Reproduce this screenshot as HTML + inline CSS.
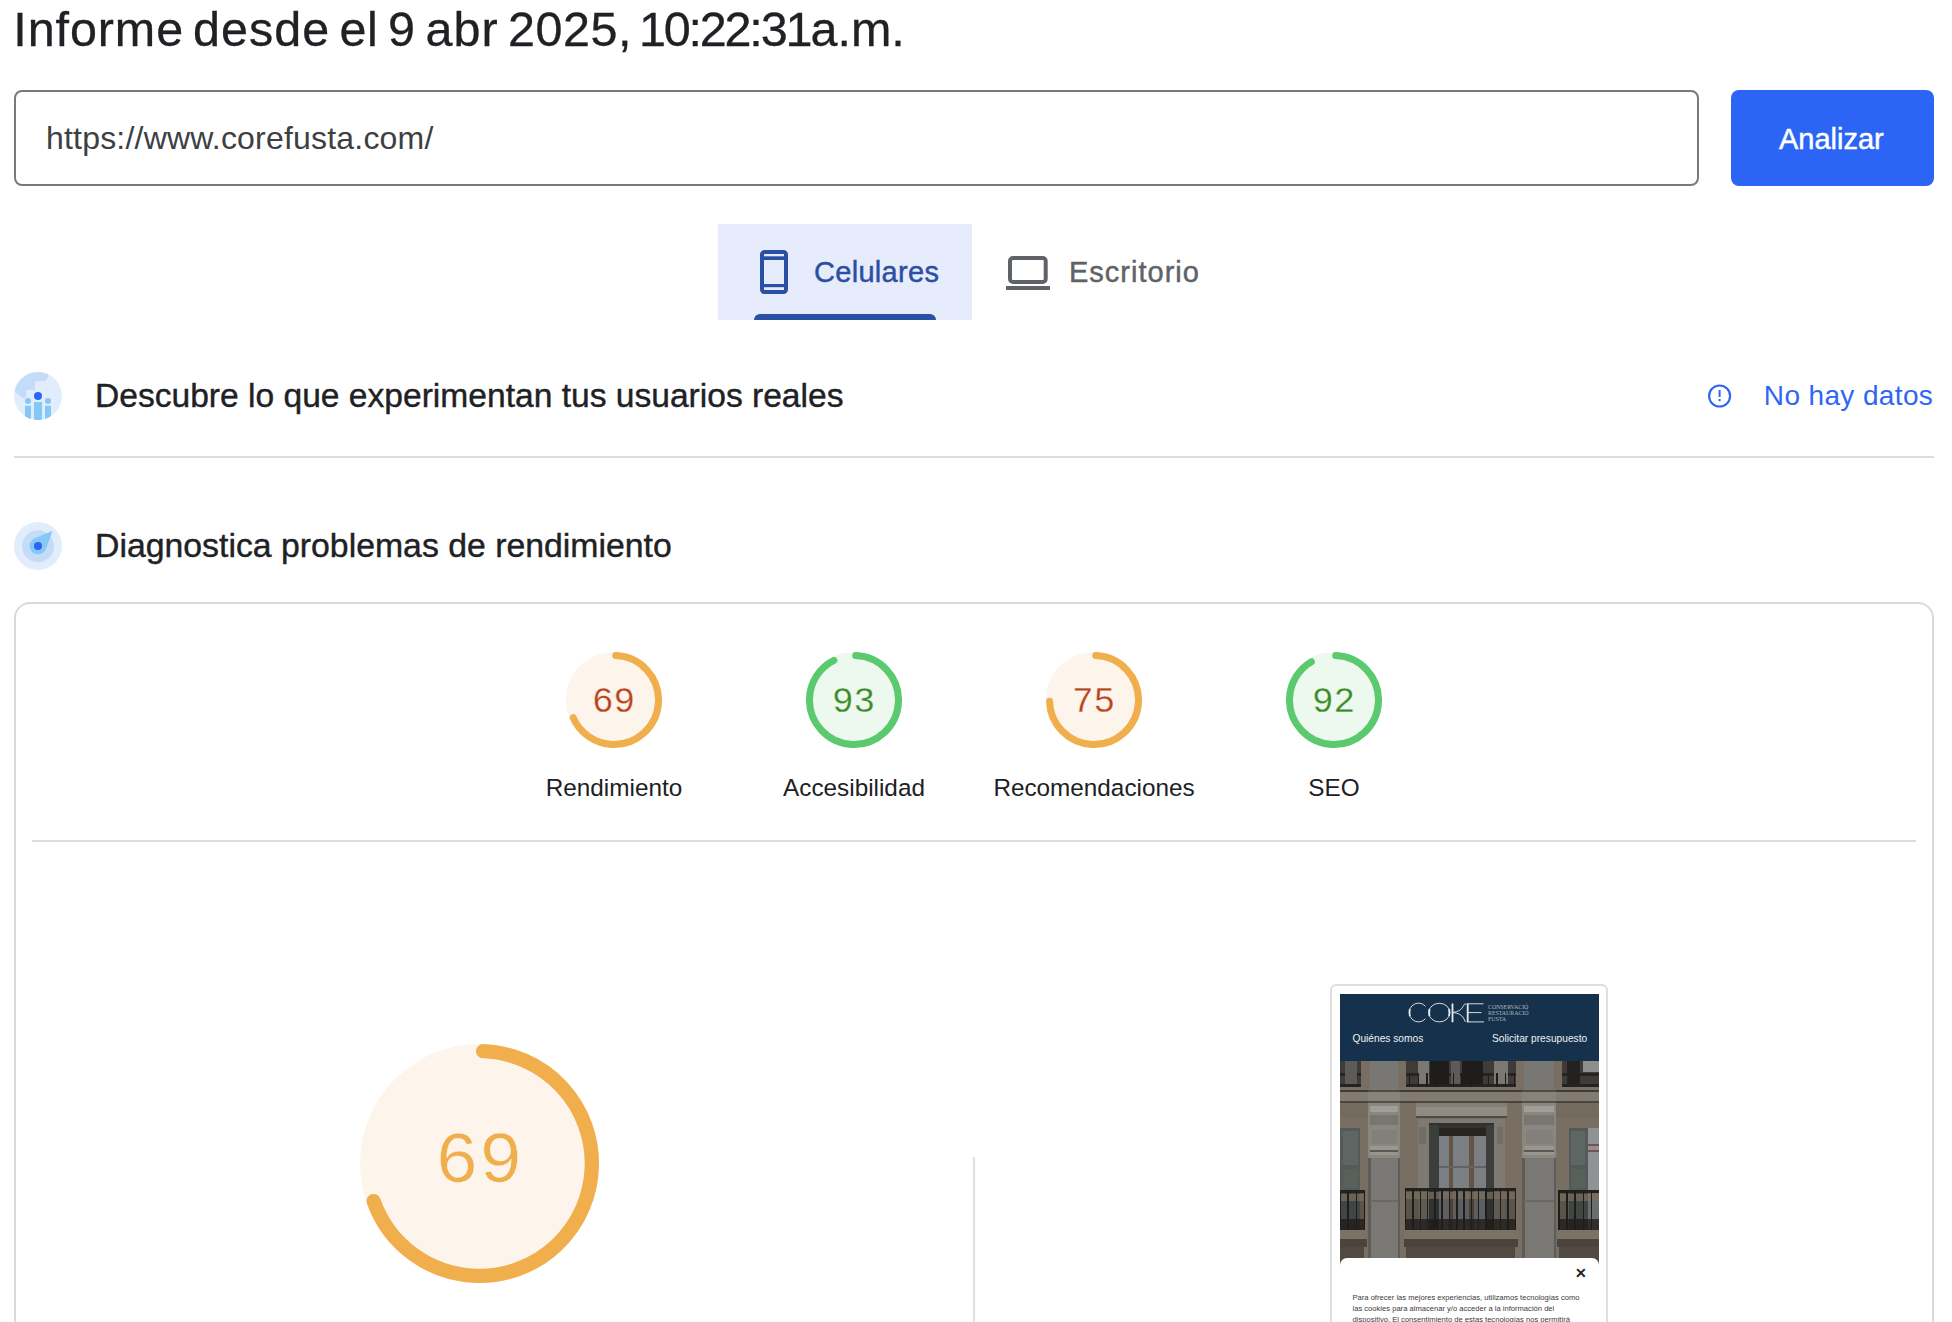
<!DOCTYPE html>
<html><head><meta charset="utf-8">
<style>
html,body{margin:0;padding:0;background:#fff;}
body{width:1952px;height:1322px;position:relative;overflow:hidden;font-family:"Liberation Sans",sans-serif;color:#202124;}
.a{position:absolute;white-space:nowrap;line-height:1;}
#title{left:0;top:4.5px;font-size:48.5px;color:#202124;-webkit-text-stroke:0.3px #202124;}
.tw{position:absolute;top:0;white-space:nowrap;}
#inp{position:absolute;left:14px;top:90px;width:1681px;height:92px;border:2px solid #777b7f;border-radius:8px;box-sizing:content-box;}
#url{left:46px;top:122px;font-size:32px;letter-spacing:0.2px;color:#3c4043;}
#btn{position:absolute;left:1731px;top:90px;width:203px;height:96px;background:#2c65f6;border-radius:8px;}
#btntxt{left:1779px;top:125px;font-size:29px;color:#fff;-webkit-text-stroke:0.45px #fff;}
#tab1{position:absolute;left:718px;top:224px;width:254px;height:96px;background:#e6ecfb;}
#tabline{position:absolute;left:754px;top:314px;width:182px;height:6px;background:#2a50a5;border-radius:6px 6px 0 0;}
#cel{left:814px;top:257.5px;font-size:29px;letter-spacing:0.3px;color:#2a4fa3;-webkit-text-stroke:0.45px #2a4fa3;}
#esc{left:1069px;top:258px;font-size:29px;letter-spacing:1px;color:#5f6368;-webkit-text-stroke:0.45px #5f6368;}
#h1{left:95px;top:379px;font-size:33.6px;color:#202124;-webkit-text-stroke:0.4px #202124;}
#nohay{left:1763.8px;top:381.5px;font-size:28px;letter-spacing:0.37px;color:#2f66f6;}
#div1{position:absolute;left:14px;top:456px;width:1920px;height:2px;background:#dadce0;}
#h2{left:95px;top:529px;font-size:33.8px;color:#202124;-webkit-text-stroke:0.4px #202124;}
#card{position:absolute;left:14px;top:602px;width:1916px;height:900px;border:2px solid #d9dadf;border-radius:16px;}
.lbl{font-size:24.3px;color:#202124;text-align:center;width:300px;}
#div2{position:absolute;left:32px;top:840px;width:1884px;height:2px;background:#dcdcdc;}
#vline{position:absolute;left:973px;top:1157px;width:2px;height:200px;background:#e0e0e0;}
#frame{position:absolute;left:1330px;top:984px;width:274px;height:400px;border:2px solid #dfdfdf;border-radius:6px;}
#shot{position:absolute;left:1340px;top:994px;width:259px;height:400px;background:#15314b;overflow:hidden;}
#photo i{position:absolute;display:block;}
#photo{position:absolute;left:0;top:0;width:259px;height:330px;filter:brightness(0.86) saturate(0.72);}
.gnum{font-family:"Liberation Mono",monospace;}
</style></head>
<body>
<div class="a" id="title"><span class="tw" style="left:13.3px;letter-spacing:0.9px">Informe</span><span class="tw" style="left:193.0px;letter-spacing:1.0px">desde</span><span class="tw" style="left:339.5px;letter-spacing:0.5px">el</span><span class="tw" style="left:388.0px;letter-spacing:0px">9</span><span class="tw" style="left:425.5px;letter-spacing:1.0px">abr</span><span class="tw" style="left:508.0px;letter-spacing:0.5px">2025,</span><span class="tw" style="left:639.0px;letter-spacing:-2.2px">10:22:31</span><span class="tw" style="left:810.5px;letter-spacing:0px">a.m.</span></div>
<div id="inp"></div>
<div class="a" id="url">https://www.corefusta.com/</div>
<div id="btn"></div>
<div class="a" id="btntxt">Analizar</div>

<div id="tab1"></div>
<div id="tabline"></div>
<svg class="a" style="left:0;top:0" width="1952" height="330">
  <!-- phone -->
  <rect x="762" y="252" width="24" height="40" rx="2.5" fill="none" stroke="#2a50a5" stroke-width="4"/>
  <rect x="762" y="256.3" width="24" height="3.7" fill="#2a50a5"/>
  <rect x="762" y="284" width="24" height="3.2" fill="#2a50a5"/>
  <!-- laptop -->
  <rect x="1010" y="258" width="35.7" height="24" rx="3" fill="none" stroke="#5f6368" stroke-width="4"/>
  <rect x="1006" y="286" width="44" height="4" fill="#5f6368"/>
</svg>
<div class="a" id="cel">Celulares</div>
<div class="a" id="esc">Escritorio</div>

<svg class="a" style="left:14px;top:372px" width="48" height="48" viewBox="0 0 48 48">
  <defs><clipPath id="cc1"><circle cx="24" cy="24" r="24"/></clipPath></defs>
  <circle cx="24" cy="24" r="24" fill="#e1edfc"/>
  <g clip-path="url(#cc1)">
    <path d="M-2 17.5 L8.2 25.4 Q10 26.8 12.1 25.5 L12.1 18.1 L21 18.1 L21 9.2 L29.5 9.2 Q31.5 9.2 33 7 L34.5 2.5 L34.5 -2 L-2 -2 Z" fill="#c4dcf8"/>
    <rect x="11" y="33.8" width="6" height="20" fill="#84c8f7"/>
    <rect x="20" y="30.1" width="8" height="24" fill="#84c8f7"/>
    <rect x="31" y="33.8" width="6" height="20" fill="#84c8f7"/>
  </g>
  <circle cx="14" cy="28.9" r="3" fill="#84c8f7"/>
  <circle cx="34" cy="28.9" r="3" fill="#84c8f7"/>
  <circle cx="24" cy="24" r="4" fill="#2f63f5"/>
</svg>
<div class="a" id="h1">Descubre lo que experimentan tus usuarios reales</div>
<svg class="a" style="left:1706px;top:383px" width="28" height="26" viewBox="0 0 28 26">
  <circle cx="13.6" cy="13" r="10.5" fill="none" stroke="#2f66f6" stroke-width="2.2"/>
  <rect x="12.6" y="7" width="2" height="7" fill="#2f66f6"/>
  <rect x="12.6" y="16" width="2" height="2.2" fill="#2f66f6"/>
</svg>
<div class="a" id="nohay">No hay datos</div>
<div id="div1"></div>

<svg class="a" style="left:14px;top:522px" width="48" height="48" viewBox="0 0 48 48">
  <circle cx="24" cy="24" r="24" fill="#e1edfc"/>
  <circle cx="24" cy="24.2" r="16" fill="#c4dcf8"/>
  <path d="M38 9.5 L31.49 26.81 A 8 8 0 1 1 20.93 16.61 Z" fill="#84c8f7" stroke="#84c8f7" stroke-width="0.8" stroke-linejoin="round"/>
  <circle cx="24" cy="24" r="4" fill="#2f63f5"/>
</svg>
<div class="a" id="h2">Diagnostica problemas de rendimiento</div>

<div id="card"></div>
<div id="div2"></div>
<div id="vline"></div>
<svg class="a" style="left:566px;top:652px" width="96" height="96" viewBox="0 0 96 96">
  <circle cx="48" cy="48" r="48" fill="#fdf5ec"/>
  <circle cx="48" cy="48" r="44.500" fill="none" stroke="#f1ae4c" stroke-width="7" stroke-linecap="round" stroke-dasharray="189.43 279.60" transform="rotate(-87.747 48 48)"/>
</svg>
<svg class="a" style="left:806px;top:652px" width="96" height="96" viewBox="0 0 96 96">
  <circle cx="48" cy="48" r="48" fill="#edf8ef"/>
  <circle cx="48" cy="48" r="44.500" fill="none" stroke="#5bca6f" stroke-width="7" stroke-linecap="round" stroke-dasharray="256.53 279.60" transform="rotate(-87.747 48 48)"/>
</svg>
<svg class="a" style="left:1046px;top:652px" width="96" height="96" viewBox="0 0 96 96">
  <circle cx="48" cy="48" r="48" fill="#fdf5ec"/>
  <circle cx="48" cy="48" r="44.500" fill="none" stroke="#f1ae4c" stroke-width="7" stroke-linecap="round" stroke-dasharray="206.20 279.60" transform="rotate(-87.747 48 48)"/>
</svg>
<svg class="a" style="left:1286px;top:652px" width="96" height="96" viewBox="0 0 96 96">
  <circle cx="48" cy="48" r="48" fill="#edf8ef"/>
  <circle cx="48" cy="48" r="44.500" fill="none" stroke="#5bca6f" stroke-width="7" stroke-linecap="round" stroke-dasharray="253.73 279.60" transform="rotate(-87.747 48 48)"/>
</svg>
<svg class="a" style="left:359.5px;top:1043.7px" width="239.0" height="239.0" viewBox="0 0 239.0 239.0">
  <circle cx="119.5" cy="119.5" r="119.5" fill="#fdf5ec"/>
  <circle cx="119.5" cy="119.5" r="112.350" fill="none" stroke="#f1ae4c" stroke-width="14.3" stroke-linecap="round" stroke-dasharray="487.08 705.92" transform="rotate(-88.177 119.5 119.5)"/>
</svg>
<div class="a gnum" style="left:592px;top:685px;font-size:36px;color:#b7441c;-webkit-text-stroke:0.3px #fdf5ec;">69</div>
<div class="a gnum" style="left:832px;top:685px;font-size:36px;color:#3a8b25;-webkit-text-stroke:0.3px #edf8ef;">93</div>
<div class="a gnum" style="left:1072px;top:685px;font-size:36px;color:#b7441c;-webkit-text-stroke:0.3px #fdf5ec;">75</div>
<div class="a gnum" style="left:1312px;top:685px;font-size:36px;color:#3a8b25;-webkit-text-stroke:0.3px #edf8ef;">92</div>
<div class="a gnum" style="left:435px;top:1126px;font-size:73px;color:#f1ae4c;-webkit-text-stroke:0.5px #fdf5ec;">69</div>
<div class="a lbl" style="left:464px;top:776px;">Rendimiento</div>
<div class="a lbl" style="left:704px;top:776px;">Accesibilidad</div>
<div class="a lbl" style="left:944px;top:776px;">Recomendaciones</div>
<div class="a lbl" style="left:1184px;top:776px;">SEO</div>
<div id="frame"></div>
<div id="shot">
<div style="position:absolute;left:0;top:0;width:259px;height:67px;background:#15314b;"></div>
<svg class="a" style="left:0;top:0" width="259" height="40" viewBox="0 0 259 40"><g fill="none" stroke="#e6ecf1" stroke-width="0.9">
<path d="M85.5 12.3 A 9.3 9.4 0 1 0 85.5 24.7"/>
<ellipse cx="99.3" cy="18.6" rx="10.6" ry="9.3"/>
<path d="M112.5 18.5 Q 121 17.5 123 12.5 Q 124 9.6 126.5 9.8 M112.5 18.5 Q 120.5 19 123.5 24 L 125.5 28"/>
<path d="M127.7 9.8 H143.5 M127.7 18.6 H141.5 M127.7 27.9 H144"/>
</g><g fill="none" stroke="#e6ecf1" stroke-width="1.8"><path d="M112.5 9.4 V28.2 M127.7 9.4 V28.2"/>
<path d="M69.8 15 Q 69.2 18.6 69.8 22.2"/><path d="M89.5 15 Q 88.9 18.6 89.5 22.2 M109.1 15 Q 109.7 18.6 109.1 22.2"/></g></svg>
<div class="a" style="left:148px;top:9.5px;font-family:'Liberation Serif',serif;font-size:6px;line-height:6.4px;letter-spacing:-0.1px;color:#a9b4bf;">CONSERVACIÓ<br>RESTAURACIÓ<br>FUSTA</div>
<div class="a" style="left:12.5px;top:40.3px;font-size:10.2px;color:#eef1f4;">Quiénes somos</div>
<div class="a" style="left:152px;top:40.3px;font-size:10.2px;color:#eef1f4;">Solicitar presupuesto</div>
<div id="photo"><i style="left:0.0px;top:66.6px;width:259.5px;height:205.7px;background:#8f806c;"></i><i style="left:65.7px;top:66.6px;width:110.4px;height:26.2px;background:#4a453f;"></i><i style="left:65.7px;top:78.5px;width:110.4px;height:3.2px;background:#2e2a26;"></i><i style="left:65.7px;top:90.4px;width:110.4px;height:3.2px;background:#2b2825;"></i><i style="left:64.1px;top:92.8px;width:113.9px;height:12.7px;background:#938470;"></i><i style="left:64.1px;top:103.6px;width:113.9px;height:3.5px;background:#4f463b;"></i><i style="left:222.1px;top:66.6px;width:37.3px;height:26.2px;background:#4a453f;"></i><i style="left:222.1px;top:78.5px;width:37.3px;height:3.2px;background:#2e2a26;"></i><i style="left:222.1px;top:90.4px;width:37.3px;height:3.2px;background:#2b2825;"></i><i style="left:220.5px;top:92.8px;width:40.8px;height:12.7px;background:#938470;"></i><i style="left:220.5px;top:103.6px;width:40.8px;height:3.5px;background:#4f463b;"></i><i style="left:0.0px;top:66.6px;width:21.2px;height:26.2px;background:#4a453f;"></i><i style="left:0.0px;top:78.5px;width:21.2px;height:3.2px;background:#2e2a26;"></i><i style="left:0.0px;top:90.4px;width:21.2px;height:3.2px;background:#2b2825;"></i><i style="left:-1.6px;top:92.8px;width:24.7px;height:12.7px;background:#938470;"></i><i style="left:-1.6px;top:103.6px;width:24.7px;height:3.5px;background:#4f463b;"></i><i style="left:77.6px;top:66.6px;width:11.1px;height:23.8px;background:#8f8b84;"></i><i style="left:153.8px;top:66.6px;width:14.3px;height:23.8px;background:#8f8b84;"></i><i style="left:90.3px;top:66.6px;width:19.1px;height:23.8px;background:#242220;"></i><i style="left:122.1px;top:66.6px;width:20.6px;height:23.8px;background:#242220;"></i><i style="left:110.9px;top:66.6px;width:9.5px;height:23.8px;background:#6e6a63;"></i><i style="left:242.8px;top:66.6px;width:16.7px;height:11.9px;background:#a5a6a4;"></i><i style="left:226.9px;top:66.6px;width:12.7px;height:23.8px;background:#2a2826;"></i><i style="left:4.5px;top:66.6px;width:12.7px;height:23.8px;background:#6d6a64;"></i><i style="left:68.9px;top:78.5px;width:1.6px;height:14.3px;background:#252220;"></i><i style="left:77.6px;top:78.5px;width:1.6px;height:14.3px;background:#252220;"></i><i style="left:86.3px;top:78.5px;width:1.6px;height:14.3px;background:#252220;"></i><i style="left:95.1px;top:78.5px;width:1.6px;height:14.3px;background:#252220;"></i><i style="left:103.8px;top:78.5px;width:1.6px;height:14.3px;background:#252220;"></i><i style="left:112.5px;top:78.5px;width:1.6px;height:14.3px;background:#252220;"></i><i style="left:121.3px;top:78.5px;width:1.6px;height:14.3px;background:#252220;"></i><i style="left:130.0px;top:78.5px;width:1.6px;height:14.3px;background:#252220;"></i><i style="left:138.7px;top:78.5px;width:1.6px;height:14.3px;background:#252220;"></i><i style="left:147.5px;top:78.5px;width:1.6px;height:14.3px;background:#252220;"></i><i style="left:156.2px;top:78.5px;width:1.6px;height:14.3px;background:#252220;"></i><i style="left:164.9px;top:78.5px;width:1.6px;height:14.3px;background:#252220;"></i><i style="left:173.7px;top:78.5px;width:1.6px;height:14.3px;background:#252220;"></i><i style="left:29.9px;top:66.6px;width:28.6px;height:29.4px;background:#8e8a84;"></i><i style="left:23.6px;top:95.9px;width:41.3px;height:12.7px;background:#a0978a;"></i><i style="left:23.6px;top:96.3px;width:41.3px;height:1.6px;background:#5e574d;"></i><i style="left:23.6px;top:106.7px;width:41.3px;height:1.9px;background:#625a4f;"></i><i style="left:28.4px;top:108.6px;width:31.8px;height:55.6px;background:#a29c92;"></i><i style="left:30.3px;top:111.8px;width:28.0px;height:6.4px;background:#bdb7ad;"></i><i style="left:30.3px;top:120.6px;width:28.0px;height:10.3px;background:#8e887f;"></i><i style="left:31.5px;top:135.7px;width:25.4px;height:14.3px;background:#9a948b;"></i><i style="left:30.3px;top:152.3px;width:28.0px;height:8.7px;background:#b4aea4;"></i><i style="left:30.3px;top:156.3px;width:28.0px;height:1.9px;background:#6d675e;"></i><i style="left:29.9px;top:164.2px;width:28.6px;height:108.0px;background:#8f8b85;"></i><i style="left:28.4px;top:164.2px;width:2.2px;height:108.0px;background:#706b63;"></i><i style="left:57.9px;top:164.2px;width:2.2px;height:108.0px;background:#706b63;"></i><i style="left:29.9px;top:206.3px;width:28.6px;height:1.6px;background:#7d7973;"></i><i style="left:184.0px;top:66.6px;width:30.2px;height:29.4px;background:#8e8a84;"></i><i style="left:177.7px;top:95.9px;width:42.9px;height:12.7px;background:#a0978a;"></i><i style="left:177.7px;top:96.3px;width:42.9px;height:1.6px;background:#5e574d;"></i><i style="left:177.7px;top:106.7px;width:42.9px;height:1.9px;background:#625a4f;"></i><i style="left:182.4px;top:108.6px;width:33.4px;height:55.6px;background:#a29c92;"></i><i style="left:184.3px;top:111.8px;width:29.5px;height:6.4px;background:#bdb7ad;"></i><i style="left:184.3px;top:120.6px;width:29.5px;height:10.3px;background:#8e887f;"></i><i style="left:185.6px;top:135.7px;width:27.0px;height:14.3px;background:#9a948b;"></i><i style="left:184.3px;top:152.3px;width:29.5px;height:8.7px;background:#b4aea4;"></i><i style="left:184.3px;top:156.3px;width:29.5px;height:1.9px;background:#6d675e;"></i><i style="left:184.0px;top:164.2px;width:30.2px;height:108.0px;background:#8f8b85;"></i><i style="left:182.4px;top:164.2px;width:2.2px;height:108.0px;background:#706b63;"></i><i style="left:213.6px;top:164.2px;width:2.2px;height:108.0px;background:#706b63;"></i><i style="left:184.0px;top:206.3px;width:30.2px;height:1.6px;background:#7d7973;"></i><i style="left:60.1px;top:95.9px;width:122.3px;height:12.7px;background:#9a8f80;"></i><i style="left:60.1px;top:96.3px;width:122.3px;height:1.6px;background:#4e463c;"></i><i style="left:60.1px;top:106.7px;width:122.3px;height:1.9px;background:#5a5044;"></i><i style="left:215.8px;top:95.9px;width:43.7px;height:12.7px;background:#9a8f80;"></i><i style="left:215.8px;top:96.3px;width:43.7px;height:1.6px;background:#4e463c;"></i><i style="left:215.8px;top:106.7px;width:43.7px;height:1.9px;background:#5a5044;"></i><i style="left:0.0px;top:95.9px;width:28.4px;height:12.7px;background:#9a8f80;"></i><i style="left:0.0px;top:96.3px;width:28.4px;height:1.6px;background:#4e463c;"></i><i style="left:0.0px;top:106.7px;width:28.4px;height:1.9px;background:#5a5044;"></i><i style="left:0.0px;top:108.6px;width:28.4px;height:15.9px;background:#8a7c69;"></i><i style="left:215.8px;top:108.6px;width:43.7px;height:15.9px;background:#8a7c69;"></i><i style="left:76.0px;top:108.6px;width:90.5px;height:15.9px;background:#9a9184;"></i><i style="left:76.0px;top:112.6px;width:90.5px;height:9.5px;background:#aaa296;"></i><i style="left:76.0px;top:122.1px;width:90.5px;height:1.6px;background:#5f574c;"></i><i style="left:77.6px;top:124.5px;width:87.4px;height:111.2px;background:#958d7f;"></i><i style="left:88.7px;top:129.3px;width:65.1px;height:106.4px;background:#3a3933;"></i><i style="left:99.0px;top:142.0px;width:46.9px;height:93.7px;background:#8e9399;"></i><i style="left:99.0px;top:134.1px;width:46.9px;height:7.9px;background:#2e2a24;"></i><i style="left:108.6px;top:142.0px;width:4.8px;height:93.7px;background:#7b6145;"></i><i style="left:129.2px;top:142.0px;width:4.8px;height:93.7px;background:#7b6145;"></i><i style="left:99.0px;top:172.2px;width:46.9px;height:1.9px;background:#70747a;"></i><i style="left:88.7px;top:130.9px;width:10.3px;height:104.8px;background:#414a45;"></i><i style="left:145.9px;top:130.9px;width:7.9px;height:104.8px;background:#414a45;"></i><i style="left:79.2px;top:132.5px;width:6.4px;height:17.5px;background:#857e72;"></i><i style="left:157.0px;top:132.5px;width:6.4px;height:17.5px;background:#857e72;"></i><i style="left:0.0px;top:134.1px;width:20.4px;height:101.7px;background:#5e6a66;"></i><i style="left:2.9px;top:137.2px;width:15.1px;height:33.4px;background:#6c7874;"></i><i style="left:2.9px;top:175.4px;width:15.1px;height:19.1px;background:#63706b;"></i><i style="left:228.5px;top:134.1px;width:19.1px;height:101.7px;background:#5e6a66;"></i><i style="left:230.9px;top:137.2px;width:14.3px;height:33.4px;background:#6c7874;"></i><i style="left:230.9px;top:175.4px;width:14.3px;height:19.1px;background:#63706b;"></i><i style="left:247.5px;top:134.1px;width:11.9px;height:101.7px;background:#a6abae;"></i><i style="left:247.5px;top:149.9px;width:11.9px;height:2.4px;background:#9a5a55;"></i><i style="left:247.5px;top:156.3px;width:11.9px;height:1.9px;background:#9a5a55;"></i><i style="left:65.7px;top:194.4px;width:109.6px;height:41.3px;background:rgba(28,25,22,0.3);"></i><i style="left:65.7px;top:194.4px;width:109.6px;height:2.5px;background:#2b2723;"></i><i style="left:65.7px;top:197.9px;width:109.6px;height:7.6px;background:rgba(150,130,100,0.7);"></i><i style="left:65.7px;top:224.6px;width:109.6px;height:11.1px;background:rgba(35,30,26,0.75);"></i><i style="left:64.9px;top:194.4px;width:1.6px;height:41.3px;background:#25221e;"></i><i style="left:72.2px;top:194.4px;width:1.6px;height:41.3px;background:#25221e;"></i><i style="left:79.5px;top:194.4px;width:1.6px;height:41.3px;background:#25221e;"></i><i style="left:86.8px;top:194.4px;width:1.6px;height:41.3px;background:#25221e;"></i><i style="left:94.1px;top:194.4px;width:1.6px;height:41.3px;background:#25221e;"></i><i style="left:101.4px;top:194.4px;width:1.6px;height:41.3px;background:#25221e;"></i><i style="left:108.7px;top:194.4px;width:1.6px;height:41.3px;background:#25221e;"></i><i style="left:116.0px;top:194.4px;width:1.6px;height:41.3px;background:#25221e;"></i><i style="left:123.3px;top:194.4px;width:1.6px;height:41.3px;background:#25221e;"></i><i style="left:130.6px;top:194.4px;width:1.6px;height:41.3px;background:#25221e;"></i><i style="left:137.9px;top:194.4px;width:1.6px;height:41.3px;background:#25221e;"></i><i style="left:145.3px;top:194.4px;width:1.6px;height:41.3px;background:#25221e;"></i><i style="left:152.6px;top:194.4px;width:1.6px;height:41.3px;background:#25221e;"></i><i style="left:159.9px;top:194.4px;width:1.6px;height:41.3px;background:#25221e;"></i><i style="left:167.2px;top:194.4px;width:1.6px;height:41.3px;background:#25221e;"></i><i style="left:174.5px;top:194.4px;width:1.6px;height:41.3px;background:#25221e;"></i><i style="left:63.8px;top:235.7px;width:113.9px;height:11.1px;background:#938470;"></i><i style="left:63.8px;top:245.2px;width:113.9px;height:7.9px;background:#5a4f42;"></i><i style="left:65.7px;top:253.2px;width:109.6px;height:19.1px;background:#615648;"></i><i style="left:219.0px;top:196.0px;width:40.5px;height:39.7px;background:rgba(28,25,22,0.3);"></i><i style="left:219.0px;top:196.0px;width:40.5px;height:2.5px;background:#2b2723;"></i><i style="left:219.0px;top:199.5px;width:40.5px;height:7.6px;background:rgba(150,130,100,0.7);"></i><i style="left:219.0px;top:224.6px;width:40.5px;height:11.1px;background:rgba(35,30,26,0.75);"></i><i style="left:218.2px;top:196.0px;width:1.6px;height:39.7px;background:#25221e;"></i><i style="left:226.3px;top:196.0px;width:1.6px;height:39.7px;background:#25221e;"></i><i style="left:234.4px;top:196.0px;width:1.6px;height:39.7px;background:#25221e;"></i><i style="left:242.5px;top:196.0px;width:1.6px;height:39.7px;background:#25221e;"></i><i style="left:250.6px;top:196.0px;width:1.6px;height:39.7px;background:#25221e;"></i><i style="left:258.7px;top:196.0px;width:1.6px;height:39.7px;background:#25221e;"></i><i style="left:217.0px;top:235.7px;width:44.8px;height:11.1px;background:#938470;"></i><i style="left:217.0px;top:245.2px;width:44.8px;height:7.9px;background:#5a4f42;"></i><i style="left:219.0px;top:253.2px;width:40.5px;height:19.1px;background:#615648;"></i><i style="left:0.0px;top:196.0px;width:24.4px;height:39.7px;background:rgba(28,25,22,0.3);"></i><i style="left:0.0px;top:196.0px;width:24.4px;height:2.5px;background:#2b2723;"></i><i style="left:0.0px;top:199.5px;width:24.4px;height:7.6px;background:rgba(150,130,100,0.7);"></i><i style="left:0.0px;top:224.6px;width:24.4px;height:11.1px;background:rgba(35,30,26,0.75);"></i><i style="left:-0.8px;top:196.0px;width:1.6px;height:39.7px;background:#25221e;"></i><i style="left:7.3px;top:196.0px;width:1.6px;height:39.7px;background:#25221e;"></i><i style="left:15.5px;top:196.0px;width:1.6px;height:39.7px;background:#25221e;"></i><i style="left:23.6px;top:196.0px;width:1.6px;height:39.7px;background:#25221e;"></i><i style="left:-1.9px;top:235.7px;width:28.7px;height:11.1px;background:#938470;"></i><i style="left:-1.9px;top:245.2px;width:28.7px;height:7.9px;background:#5a4f42;"></i><i style="left:0.0px;top:253.2px;width:24.4px;height:19.1px;background:#615648;"></i></div>
<div style="position:absolute;left:0;top:263.5px;width:259px;height:100px;background:#fff;border-radius:7px 7px 0 0;"></div>
<div class="a" style="left:234.5px;top:271.5px;font-size:14px;font-weight:bold;color:#222;">&#x2715;</div>
<div class="a" style="left:12.5px;top:299px;font-size:7.6px;line-height:10.9px;color:#3a3a3a;">Para ofrecer las mejores experiencias, utilizamos tecnologías como<br>las cookies para almacenar y/o acceder a la información del<br>dispositivo. El consentimiento de estas tecnologías nos permitirá</div>
</div><!--/shot-->
</body></html>
